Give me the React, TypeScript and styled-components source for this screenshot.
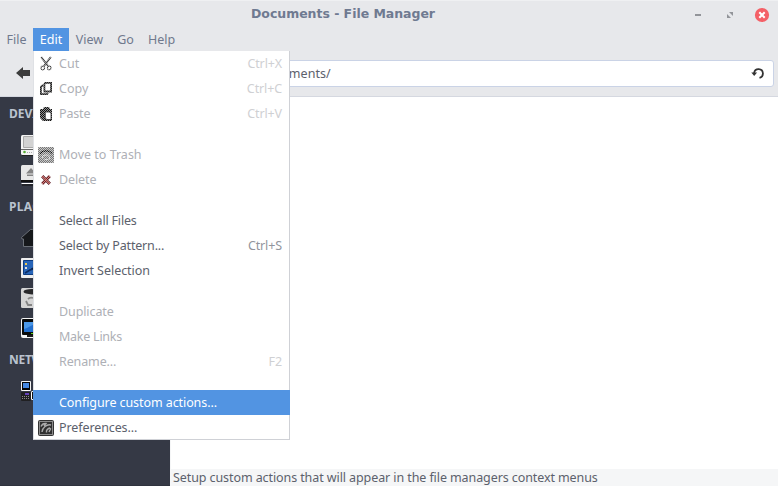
import React from 'react';
import styled, { createGlobalStyle } from 'styled-components';

const GlobalStyle = createGlobalStyle`
  * { box-sizing: border-box; }
  html, body { margin: 0; padding: 0; overflow: hidden; }
  body { font-family: "Noto Sans", "Open Sans", sans-serif; font-size: 12.5px; color: #5c616c; }
  svg { display: block; flex: none; }
`;

const Window = styled.div`
  position: relative;
  width: 778px;
  height: 486px;
  display: flex;
  flex-direction: column;
  background: #e7e8eb;
  overflow: hidden;
`;

const TitleBar = styled.header`
  height: 28px;
  display: grid;
  grid-template-columns: 1fr auto;
  align-items: center;
  border-top: 1px solid #eff0f2;
`;

const Title = styled.h1`
  margin: 0;
  padding: 0 0 1px 251px;
  font: bold 12.5px/16px "DejaVu Sans", sans-serif;
  letter-spacing: -0.03px;
  color: #6f7a91;
  white-space: nowrap;
`;

const Controls = styled.div`
  display: flex;
  align-items: center;
  gap: 16px;
  padding-right: 8px;
`;

const MenuBar = styled.nav`
  height: 23px;
  display: flex;
`;

const MenuTitle = styled.div<{ $w: number; $active?: boolean }>`
  width: ${(p) => p.$w}px;
  height: 23px;
  text-align: center;
  line-height: 23px;
  color: ${(p) => (p.$active ? '#fff' : '#70798d')};
  background: ${(p) => (p.$active ? '#5294e2' : 'transparent')};
`;

const Toolbar = styled.div`
  height: 46px;
  display: flex;
  align-items: flex-start;
  padding: 9px 4px 0 15px;
  border-bottom: 1px solid #d5d8e0;
`;

const BackButton = styled.div`
  width: 45px;
  padding-top: 6px;
`;

const PathField = styled.div`
  flex: 1;
  height: 27px;
  display: flex;
  align-items: center;
  justify-content: space-between;
  padding: 0 8px 0 197px;
  background: #fff;
  border: 1px solid #cad3e6;
  border-radius: 3px;
  letter-spacing: 0.08px;
`;

const Body = styled.div`
  flex: 1;
  display: flex;
  min-height: 0;
`;

const Sidebar = styled.aside`
  width: 170px;
  background: #353945;
  border-bottom: 1px solid #2f333e;
`;

const Heading = styled.div<{ $spacing: number }>`
  height: 33px;
  padding-left: 9px;
  font-size: 12px;
  font-weight: 700;
  line-height: 33px;
  letter-spacing: ${(p) => p.$spacing}px;
  color: #bac3cf;
`;

const Place = styled.div`
  height: 30px;
  padding: 3px 0 0 19px;
`;

const Main = styled.main`
  flex: 1;
  display: flex;
  flex-direction: column;
  justify-content: flex-end;
  background: #fff;
  border-left: 1px solid #f5f6f7;
`;

const StatusBar = styled.footer`
  height: 17px;
  padding-left: 2px;
  line-height: 17px;
  letter-spacing: -0.09px;
  background: #f5f6f7;
  white-space: nowrap;
`;

const Menu = styled.div`
  position: absolute;
  left: 33px;
  top: 51px;
  width: 257px;
  height: 389px;
  background: #fff;
  box-shadow: inset -1px -1px #cfd1d6, inset 1px 0 #dfe1e5;
`;

const Item = styled.div<{ $state: 'off' | 'on' | 'hover' }>`
  height: 25px;
  display: grid;
  grid-template-columns: 21px 1fr auto;
  align-items: center;
  padding: 0 8px 0 5px;
  line-height: 25px;
  white-space: nowrap;
  color: ${(p) => ({ off: '#aeb0b6', on: '#5c616c', hover: '#fff' })[p.$state]};
  background: ${(p) => (p.$state === 'hover' ? '#5294e2' : 'transparent')};
`;

const Label = styled.span<{ $spacing: number }>`
  letter-spacing: ${(p) => p.$spacing}px;
`;

const Shortcut = styled.span<{ $dim: boolean }>`
  letter-spacing: -0.12px;
  color: ${(p) => (p.$dim ? '#cfd0d3' : '#92959d')};
`;

const Separator = styled.div`
  height: 16px;
`;

function Dither({ children, low = '#777' }: { children: React.ReactNode; low?: string }) {
  const id = React.useId().replace(/[^a-zA-Z0-9]/g, '');
  return (
    <svg width="16" height="16" viewBox="0 0 16 16">
      <defs>
        <pattern id={id + 'p'} width="2" height="2" patternUnits="userSpaceOnUse">
          <path fill="#fff" shapeRendering="crispEdges" d="M0 0h1v1H0zM1 1h1v1H1z" />
          <path fill={low} shapeRendering="crispEdges" d="M1 0h1v1H1zM0 1h1v1H0z" />
        </pattern>
        <mask id={id + 'm'} maskUnits="userSpaceOnUse" x="0" y="0" width="16" height="16">
          <rect width="16" height="16" fill={`url(#${id}p)`} />
        </mask>
      </defs>
      <g mask={`url(#${id}m)`}>{children}</g>
    </svg>
  );
}

const CutIcon = () => (
  <Dither low="#888">
    <g fill="none" stroke="#444">
      <path strokeWidth="2" d="M3.2 1 10 10M12.8 1 6 10" />
      <circle cx="4.8" cy="12" r="1.8" strokeWidth="1.2" />
      <circle cx="11.2" cy="12" r="1.8" strokeWidth="1.2" />
    </g>
  </Dither>
);

const CopyIcon = () => (
  <Dither low="#aaa">
    <g fill="none" stroke="#222" strokeWidth="1.8">
      <path d="M5.5 4.5h-1L2.9 6v7.1h6.2L10 12" />
      <path d="M7.3 1.9h5.8v8.6H6.4V3z" />
    </g>
  </Dither>
);

const PasteIcon = () => (
  <svg width="16" height="16" viewBox="0 0 16 16">
    <foreignObject width="0" height="0" />
    <Dither low="#777">
      <path fill="#111" d="M2 3h3l1-2h5l1 2h2v11l-1 1H5l-3-3z" />
    </Dither>
    <path fill="#fff" stroke="#333" strokeWidth=".8" d="M8.5 6h3.2L13 7.5v6H8.8L7.3 12V7.2z" />
  </svg>
);

const TrashIcon = () => (
  <Dither low="#666">
    <rect width="16" height="16" rx="1" fill="#777" />
    <path fill="none" stroke="#000" strokeWidth="1.3" d="M2 6.5q2-2.7 6-2.7t6 2.7" />
    <path fill="none" stroke="#ccc" strokeWidth="1" d="M4.5 11V9l3-1h2l2 2v2M6.5 12.5h4" />
  </Dither>
);

const DeleteIcon = () => (
  <Dither low="#999">
    <path fill="none" stroke="#571119" strokeWidth="3.2" d="m4.2 4.2 7.6 7.6m0-7.6-7.6 7.6" />
    <path fill="none" stroke="#b5423b" strokeWidth="1.2" d="m4.2 4.2 7.6 7.6m0-7.6-7.6 7.6" />
  </Dither>
);

const PrefsIcon = () => (
  <svg width="16" height="16" viewBox="0 0 16 16">
    <rect x=".5" y=".5" width="15" height="15" rx="1" fill="#8b8b8b" stroke="#333" />
    <path fill="#303030" d="M2 2h12v12H2z" />
    <path fill="none" stroke="#aaa" strokeWidth="1.4" d="M3 6.5Q4.5 3 8 3.5L6 6M4 12q0-3 3-5.5Q10 4 13 5M8.5 12.5q-.5-3 3-4.5l1 1-1.5 3" />
  </svg>
);

const DriveIcon = () => (
  <svg width="24" height="24" viewBox="0 0 24 24">
    <rect x="2" y="2" width="21" height="20" rx="1.5" fill="#f4f4f4" />
    <path fill="#d2d2d2" stroke="#aaa" d="M4.5 3.5h17v11h-17z" />
    <path stroke="#666" d="M2 16.5h21" />
    <path stroke="#222" d="M3 22.5h20" />
    <circle cx="5.5" cy="19" r="1.3" fill="#57ad35" />
    <path stroke="#aaa" strokeDasharray="1 1" d="M8 19.5h13" />
  </svg>
);

const EjectIcon = () => (
  <svg width="24" height="24" viewBox="0 0 24 24">
    <rect x="2" y="2" width="21" height="16" rx="1.5" fill="#e8e8e8" />
    <path fill="#858585" d="m12 5 5 5.5H7zM8 11.5h8V13H8z" />
    <path stroke="#111" strokeWidth="2" d="M2 18h21" />
    <path stroke="#fff" d="M2.5 20.5H23" />
    <path stroke="#111" d="M3 22h20" />
  </svg>
);

const HomeIcon = () => (
  <svg width="24" height="24" viewBox="0 0 24 24">
    <path fill="#16181b" stroke="#6b7078" d="M2.5 11.5 11.5 3.5h2l9 8-1 1.5h-1.5v7.5H4.5V13H3z" />
  </svg>
);

const DesktopIcon = () => (
  <svg width="24" height="24" viewBox="0 0 24 24">
    <rect x="2" y="2" width="21" height="20" rx="1" fill="#eee" />
    <path fill="#2865b8" stroke="#0d3c80" d="M4.5 4.5h17v14h-17z" />
    <path fill="#edc855" d="M6 7h2v2H6z" />
    <path fill="#dedede" d="M6 11h2v2H6z" />
    <path stroke="#0b2c62" strokeWidth="1.6" d="m6 17 5-3 3-1 5-5" />
  </svg>
);

const BinIcon = () => (
  <svg width="24" height="24" viewBox="0 0 24 24">
    <rect x="2" y="2" width="21" height="20" rx="1.5" fill="#d5d5d5" />
    <ellipse cx="13" cy="5.7" rx="8.5" ry="2.7" fill="#29292b" />
    <path fill="none" stroke="#858585" strokeWidth="1.8" d="M9 13q2-2 5-1M7 15l2 4h4M16 13l1 4" />
  </svg>
);

const ScreenIcon = () => (
  <svg width="24" height="24" viewBox="0 0 24 24">
    <rect x="2" y="2" width="21" height="20" rx="2" fill="#f5f5f5" />
    <rect x="3" y="3" width="19" height="16" rx="1" fill="#080a0b" />
    <path fill="#236fce" d="M5 6h14v10H5z" />
    <path fill="#4a97e8" d="M5 6h14L8 12l-3 1z" />
    <path stroke="#1a1a1a" strokeWidth="2" d="M8 20h10" />
    <path fill="#5ed51c" d="M12 17h2v1h-2z" />
  </svg>
);

const NetworkIcon = () => (
  <svg width="24" height="24" viewBox="0 0 24 24">
    <rect x="2" y="2" width="10" height="10" rx="1" fill="#f3f3f3" />
    <path fill="#050505" d="M3 3h8v8H3z" />
    <path fill="#4588e2" d="M4 4h6v5H4z" />
    <path stroke="#fff" d="M5 11.5h4" />
    <rect x="2" y="13" width="10" height="9" rx="1" fill="#202022" />
    <path fill="#6543ba" d="M6 14h4v2H6z" />
    <path stroke="#888" strokeDasharray="1 1" d="M3 17.5h8M3 19.5h8" />
    <rect x="12" y="12" width="10" height="9" rx="1.5" fill="#fff" />
    <path fill="#111" d="M13 13h8v7h-8z" />
  </svg>
);

const sidebar: { title: string; spacing: number; icons: React.FC[] }[] = [
  { title: 'DEVICES', spacing: 0, icons: [DriveIcon, EjectIcon] },
  { title: 'PLACES', spacing: 0.35, icons: [HomeIcon, DesktopIcon, BinIcon, ScreenIcon] },
  { title: 'NETWORK', spacing: -0.3, icons: [NetworkIcon] },
];

type Entry = {
  label: string;
  key?: string;
  icon?: React.FC;
  spacing?: number;
  state?: 'off' | 'on' | 'hover';
};
const groups: Entry[][] = [
  [
    { label: 'Cut', key: 'Ctrl+X', icon: CutIcon },
    { label: 'Copy', key: 'Ctrl+C', icon: CopyIcon },
    { label: 'Paste', key: 'Ctrl+V', icon: PasteIcon, spacing: -0.15 },
  ],
  [
    { label: 'Move to Trash', icon: TrashIcon },
    { label: 'Delete', icon: DeleteIcon, spacing: -0.1 },
  ],
  [
    { label: 'Select all Files', state: 'on', spacing: -0.19 },
    { label: 'Select by Pattern...', key: 'Ctrl+S', state: 'on', spacing: -0.17 },
    { label: 'Invert Selection', state: 'on', spacing: -0.03 },
  ],
  [
    { label: 'Duplicate', spacing: -0.1 },
    { label: 'Make Links', spacing: -0.25 },
    { label: 'Rename...', key: 'F2', spacing: -0.12 },
  ],
  [
    { label: 'Configure custom actions...', state: 'hover', spacing: -0.08 },
    { label: 'Preferences...', icon: PrefsIcon, state: 'on', spacing: -0.1 },
  ],
];

export default function App() {
  return (
    <Window>
      <GlobalStyle />
      <TitleBar>
        <Title>Documents - File Manager</Title>
        <Controls>
          <svg width="16" height="16" viewBox="0 0 16 16">
            <path fill="#929499" d="M5 7h6v2H5z" />
          </svg>
          <svg width="16" height="16" viewBox="0 0 16 16">
            <path fill="#929499" d="M7 5h4v4zM5 7v4h4z" />
          </svg>
          <svg width="16" height="16" viewBox="0 0 16 16">
            <circle cx="8" cy="8" r="7.1" fill="#f46067" />
            <path stroke="#fff" strokeWidth="2" d="m5.3 5.3 5.4 5.4m0-5.4-5.4 5.4" />
          </svg>
        </Controls>
      </TitleBar>
      <MenuBar>
        <MenuTitle $w={33}>File</MenuTitle>
        <MenuTitle $w={36} $active>Edit</MenuTitle>
        <MenuTitle $w={41}>View</MenuTitle>
        <MenuTitle $w={31}>Go</MenuTitle>
        <MenuTitle $w={41}>Help</MenuTitle>
      </MenuBar>
      <Toolbar>
        <BackButton>
          <svg width="16" height="14" viewBox="0 0 16 14">
            <path fill="#3c3c3c" d="M1 7 8 1v3h7v6H8v3z" />
          </svg>
        </BackButton>
        <PathField>
          <span>Documents/</span>
          <svg width="14" height="14" viewBox="0 0 14 14">
            <path fill="none" stroke="#333" strokeWidth="1.8" d="M3.2 6.5V5.7a4.4 4.4 0 1 1 5.3 5.2" />
            <path fill="#333" d="M.3 5.5h5.8L3.2 9z" />
          </svg>
        </PathField>
      </Toolbar>
      <Body>
        <Sidebar>
          {sidebar.map(({ title, spacing, icons }) => (
            <section key={title}>
              <Heading $spacing={spacing}>{title}</Heading>
              {icons.map((Icon, i) => (
                <Place key={i}><Icon /></Place>
              ))}
            </section>
          ))}
        </Sidebar>
        <Main>
          <StatusBar>Setup custom actions that will appear in the file managers context menus</StatusBar>
        </Main>
      </Body>
      <Menu>
        {groups.map((group, g) => (
          <React.Fragment key={g}>
            {g > 0 && <Separator />}
            {group.map(({ label, key, icon: Icon, spacing = 0, state = 'off' }) => (
              <Item key={label} $state={state}>
                <span>{Icon && <Icon />}</span>
                <Label $spacing={spacing}>{label}</Label>
                {key && <Shortcut $dim={state === 'off'}>{key}</Shortcut>}
              </Item>
            ))}
          </React.Fragment>
        ))}
      </Menu>
    </Window>
  );
}
